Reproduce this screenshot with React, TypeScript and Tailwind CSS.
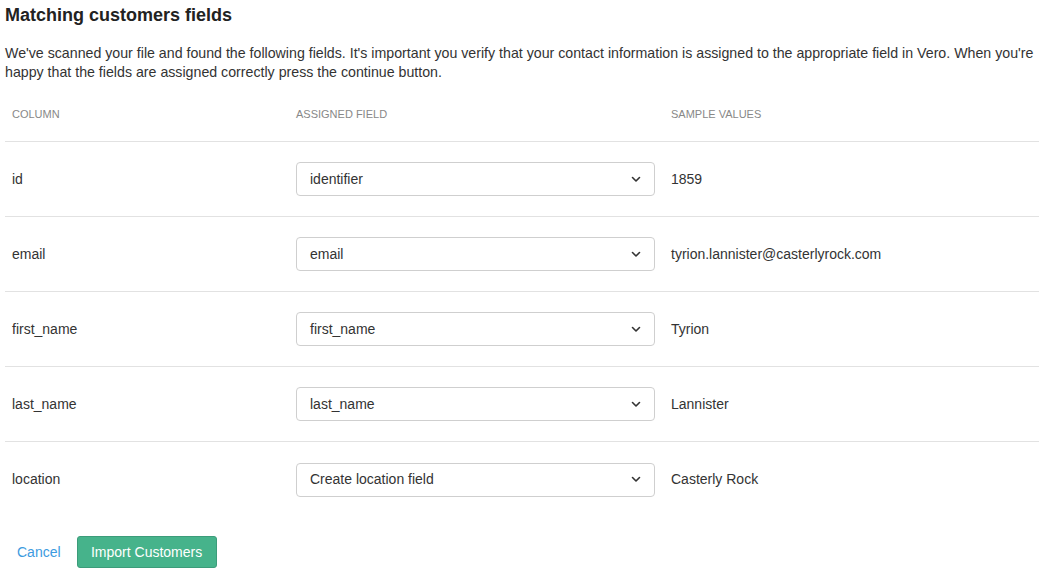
import React from "react";

const rows = [
  { col: "id", field: "identifier", sample: "1859" },
  { col: "email", field: "email", sample: "tyrion.lannister@casterlyrock.com" },
  { col: "first_name", field: "first_name", sample: "Tyrion" },
  { col: "last_name", field: "last_name", sample: "Lannister" },
  { col: "location", field: "Create location field", sample: "Casterly Rock" },
];

function Chevron() {
  return (
    <svg width="10" height="7" viewBox="0 0 10 7" fill="none">
      <path d="M1.5 1.5L5 5L8.5 1.5" stroke="#333" strokeWidth="1.6" strokeLinecap="round" strokeLinejoin="round" />
    </svg>
  );
}

export default function App() {
  return (
    <div className="bg-white w-[1050px] h-[577px] pl-[5px] pr-[11px] pt-[3px] text-[#333]" style={{ fontFamily: '"Liberation Sans", Arial, sans-serif' }}>
      <h1 className="text-[18px] leading-[24px] font-bold text-[#222]">Matching customers fields</h1>
      <p className="mt-[17px] text-[14.2px] leading-[19px]">
        We've scanned your file and found the following fields. It's important you verify that your contact information is assigned to the appropriate field in Vero. When you're happy that the fields are assigned correctly press the continue button.
      </p>
      <div className="mt-[5px]">
        <div className="flex h-[55px] items-center border-b border-[#e2e2e2] text-[11px] uppercase text-[#888]">
          <div className="w-[284px] pl-[7px]">Column</div>
          <div className="w-[375px] pl-[7px]">Assigned field</div>
          <div className="pl-[7px]">Sample values</div>
        </div>
        {rows.map((r, i) => (
          <div key={r.col} className={`flex h-[75px] items-center text-[14px] ${i < rows.length - 1 ? "border-b border-[#e2e2e2]" : ""}`}>
            <div className="w-[284px] pl-[7px]">{r.col}</div>
            <div className="w-[375px] pl-[7px] pr-[9px]">
              <div className="flex h-[34px] items-center justify-between rounded-[4px] border border-[#cfcfcf] bg-white pl-[13px] pr-[13px]">
                <span>{r.field}</span>
                <Chevron />
              </div>
            </div>
            <div className="pl-[7px]">{r.sample}</div>
          </div>
        ))}
      </div>
      <div className="mt-[19px] flex items-center">
        <span className="ml-[12px] text-[14px] text-[#3d9be0]">Cancel</span>
        <button className="ml-[16px] h-[32px] w-[140px] rounded-[3px] border border-[#3c9c7a] bg-[#46b38b] text-[14px] text-white">Import Customers</button>
      </div>
    </div>
  );
}
